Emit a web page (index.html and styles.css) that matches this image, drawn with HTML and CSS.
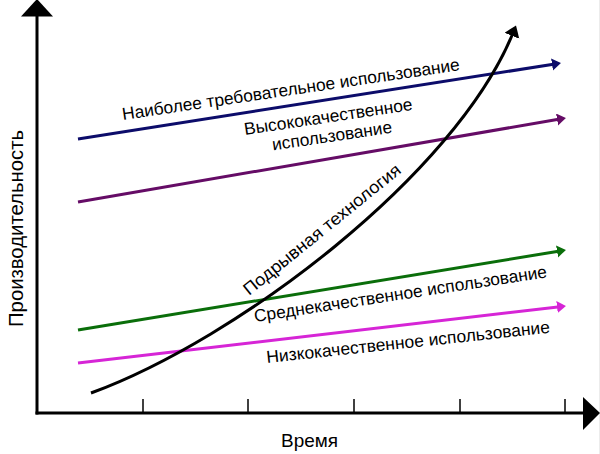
FILE: index.html
```html
<!DOCTYPE html>
<html lang="ru">
<head>
<meta charset="utf-8">
<title>Подрывная технология</title>
<link rel="stylesheet" href="styles.css">
</head>
<body>
<main class="canvas">
<svg class="chart" width="600" height="454" viewBox="0 0 600 454" xmlns="http://www.w3.org/2000/svg">
  <defs>
    <marker id="m-navy" markerUnits="userSpaceOnUse" markerWidth="10" markerHeight="13" refX="3" refY="6" orient="auto">
      <path class="fill-navy" d="M0,0 L9,6 L0,12 z"/>
    </marker>
    <marker id="m-purple" markerUnits="userSpaceOnUse" markerWidth="10" markerHeight="13" refX="3" refY="6" orient="auto">
      <path class="fill-purple" d="M0,0 L9,6 L0,12 z"/>
    </marker>
    <marker id="m-green" markerUnits="userSpaceOnUse" markerWidth="10" markerHeight="13" refX="3" refY="6" orient="auto">
      <path class="fill-green" d="M0,0 L9,6 L0,12 z"/>
    </marker>
    <marker id="m-magenta" markerUnits="userSpaceOnUse" markerWidth="10" markerHeight="13" refX="3" refY="6" orient="auto">
      <path class="fill-magenta" d="M0,0 L9,6 L0,12 z"/>
    </marker>
    <marker id="m-black" markerUnits="userSpaceOnUse" markerWidth="12" markerHeight="17" refX="3" refY="8" orient="auto">
      <path class="fill-black" d="M0,0 L11,8 L0,16 z"/>
    </marker>
  </defs>

  <line class="edge" x1="599.5" y1="0" x2="599.5" y2="454"/>

  <!-- axes -->
  <line class="axis" x1="37" y1="14" x2="37" y2="414.5"/>
  <polygon class="fill-black" points="21,16.5 37,-1 53,16.5"/>
  <line class="axis" x1="35.5" y1="413" x2="585" y2="413"/>
  <polygon class="fill-black" points="583,397 600,413 583,430"/>

  <line class="tick" x1="143" y1="399" x2="143" y2="413"/>
  <line class="tick" x1="248" y1="399" x2="248" y2="413"/>
  <line class="tick" x1="354" y1="399" x2="354" y2="413"/>
  <line class="tick" x1="460" y1="399" x2="460" y2="413"/>
  <line class="tick" x1="565" y1="399" x2="565" y2="413"/>

  <!-- usage lines -->
  <line class="usage navy" x1="78" y1="139" x2="555" y2="64" marker-end="url(#m-navy)"/>
  <line class="usage purple" x1="78" y1="202" x2="560" y2="119" marker-end="url(#m-purple)"/>
  <line class="usage green" x1="78" y1="330" x2="560" y2="251" marker-end="url(#m-green)"/>
  <line class="usage magenta" x1="78" y1="363" x2="560" y2="306.7" marker-end="url(#m-magenta)"/>

  <!-- disruptive technology curve -->
  <path class="curve" d="M91,393 C238,339 455,175 513,33" marker-end="url(#m-black)"/>

  <!-- labels -->
  <text class="label" x="123" y="120" textLength="341" lengthAdjust="spacingAndGlyphs" transform="rotate(-8.4 123 120)">Наиболее требовательное использование</text>
  <text class="label" x="245" y="135" textLength="170" lengthAdjust="spacingAndGlyphs" transform="rotate(-8.5 245 135)">Высококачественное</text>
  <text class="label" x="273" y="150.5" textLength="121" lengthAdjust="spacingAndGlyphs" transform="rotate(-8.5 273 150.5)">использование</text>
  <text class="label" x="249" y="296" textLength="197" lengthAdjust="spacingAndGlyphs" transform="rotate(-39 249 296)">Подрывная технология</text>
  <text class="label" x="255" y="322" textLength="296" lengthAdjust="spacingAndGlyphs" transform="rotate(-8.7 255 322)">Среднекачественное использование</text>
  <text class="label" x="267" y="363" textLength="285" lengthAdjust="spacingAndGlyphs" transform="rotate(-6.1 267 363)">Низкокачественное использование</text>

  <text class="axis-title y-title" x="23" y="327" textLength="197" lengthAdjust="spacingAndGlyphs" transform="rotate(-90 23 327)">Производительность</text>
  <text class="axis-title" x="281" y="447" textLength="57" lengthAdjust="spacingAndGlyphs">Время</text>
</svg>
</main>
</body>
</html>
```

FILE: styles.css
```css
html, body {
  margin: 0;
  padding: 0;
  background: #ffffff;
}

.canvas {
  width: 600px;
  height: 454px;
  overflow: hidden;
}

.chart {
  display: block;
}

.edge {
  stroke: #ececec;
  stroke-width: 1;
}

.axis {
  stroke: #000000;
  stroke-width: 3;
}

.tick {
  stroke: #000000;
  stroke-width: 1.5;
}

.usage {
  stroke-width: 3;
  fill: none;
}

.navy { stroke: #0c0c6a; }
.purple { stroke: #650c66; }
.green { stroke: #0a6e0a; }
.magenta { stroke: #d625d6; }

.fill-navy { fill: #0c0c6a; }
.fill-purple { fill: #650c66; }
.fill-green { fill: #0a6e0a; }
.fill-magenta { fill: #d625d6; }
.fill-black { fill: #000000; }

.curve {
  stroke: #000000;
  stroke-width: 3;
  fill: none;
}

.label {
  font-family: "Liberation Sans", Arial, sans-serif;
  font-size: 17.3px;
  fill: #000000;
}

.axis-title {
  font-family: "Liberation Sans", Arial, sans-serif;
  font-size: 19px;
  fill: #000000;
}

.y-title {
  font-size: 20px;
}
```
